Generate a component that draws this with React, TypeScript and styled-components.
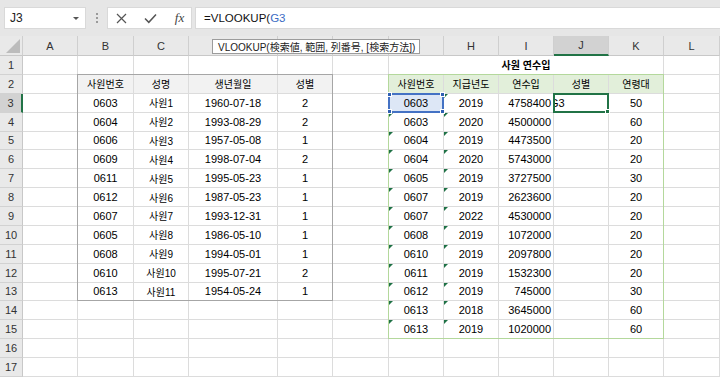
import React from "react";
import styled, { createGlobalStyle } from "styled-components";

const GRID = "#dcdcdc";
const EXCEL_GREEN = "#217346";
const COL_LETTERS = ["A", "B", "C", "D", "E", "F", "G", "H", "I", "J", "K", "L"];
// D, E and F sit under the function tooltip
const HIDDEN_LETTERS = ["D", "E", "F"];
const COL_WIDTHS = [23, 55, 56, 55, 89, 55, 56, 55, 55, 55, 55, 55, 56];
const ROW_COUNT = 17;

const employees = [
    ["0603", "사원1", "1960-07-18", "2"],
    ["0604", "사원2", "1993-08-29", "2"],
    ["0606", "사원3", "1957-05-08", "1"],
    ["0609", "사원4", "1998-07-04", "2"],
    ["0611", "사원5", "1995-05-23", "1"],
    ["0612", "사원6", "1987-05-23", "1"],
    ["0607", "사원7", "1993-12-31", "1"],
    ["0605", "사원8", "1986-05-10", "1"],
    ["0608", "사원9", "1994-05-01", "1"],
    ["0610", "사원10", "1995-07-21", "2"],
    ["0613", "사원11", "1954-05-24", "1"],
];

const incomes = [
    ["0603", "2019", "4758400", "", "50"],
    ["0603", "2020", "4500000", "", "60"],
    ["0604", "2019", "4473500", "", "20"],
    ["0604", "2020", "5743000", "", "20"],
    ["0605", "2019", "3727500", "", "30"],
    ["0607", "2019", "2623600", "", "20"],
    ["0607", "2022", "4530000", "", "20"],
    ["0608", "2019", "1072000", "", "20"],
    ["0610", "2019", "2097800", "", "20"],
    ["0611", "2019", "1532300", "", "20"],
    ["0612", "2019", "745000", "", "30"],
    ["0613", "2018", "3645000", "", "60"],
    ["0613", "2019", "1020000", "", "60"],
];

type Align = "left" | "center" | "right";

interface CellSpec {
    text?: string;
    align?: Align;
    bg?: string;
    bold?: boolean;
    ko?: boolean;
    mark?: boolean;
    span?: number;
    skip?: boolean;
    clipped?: boolean;
}

// r: sheet row (1-based), c: sheet column (1 = A)
const specFor = (r: number, c: number): CellSpec => {
    if (r >= 2 && r <= 13 && c >= 2 && c <= 5) {
        if (r === 2) {
            return {text: ["사원번호", "성명", "생년월일", "성별"][c - 2], bg: "#f2f2f2", ko: true};
        }
        return {text: employees[r - 3][c - 2], ko: c === 3};
    }
    if (r === 1 && c === 7) {
        return {text: "사원 연수입", bold: true, ko: true, span: 5};
    }
    if (r === 1 && c > 7 && c <= 11) {
        return {skip: true};
    }
    if (r >= 2 && r <= 15 && c >= 7 && c <= 11) {
        if (r === 2) {
            return {text: ["사원번호", "지급년도", "연수입", "성별", "연령대"][c - 7], bg: "#e2efda", ko: true};
        }
        if (r === 3 && c === 10) {
            return {text: "G3", align: "left", clipped: true};
        }
        return {
            text: incomes[r - 3][c - 7],
            align: c === 9 ? "right" : "center",
            mark: c === 7 || c === 8,
            bg: r === 3 && c === 7 ? "#dde7f6" : undefined,
        };
    }
    return {};
};

const GlobalStyle = createGlobalStyle`
  html, body {
    margin: 0;
    padding: 0;
    background: #fff;
  }

  body {
    font-family: "Liberation Sans", "Noto Sans CJK KR", sans-serif;
    overflow: hidden;
  }
`;

const Window = styled.div`
  width: 720px;
  height: 378px;
  overflow: hidden;
  background: #fff;
`;

const FormulaBar = styled.div`
  height: 36px;
  box-sizing: border-box;
  background: #e6e6e6;
  display: flex;
  align-items: flex-start;
  padding: 7px 0 0 4px;
`;

const NameBox = styled.div`
  width: 82px;
  height: 22px;
  box-sizing: border-box;
  background: #fff;
  border: 1px solid #d9d9d9;
  display: flex;
  align-items: center;
  justify-content: space-between;
  padding: 0 6px 0 5px;
  font-size: 12px;
  color: #222;
`;

const DropArrow = styled.span`
  width: 0;
  height: 0;
  border-left: 3px solid transparent;
  border-right: 3px solid transparent;
  border-top: 3px solid #555;
`;

const Grip = styled.div`
  width: 21px;
  height: 22px;
  display: flex;
  flex-direction: column;
  align-items: center;
  justify-content: center;
  gap: 2px;

  span {
    width: 2px;
    height: 2px;
    background: #9a9a9a;
  }
`;

const ButtonBox = styled.div`
  width: 85px;
  height: 22px;
  box-sizing: border-box;
  background: #fff;
  border: 1px solid #d9d9d9;
  display: flex;
  align-items: center;
  padding-left: 7px;
  gap: 16px;
`;

const IconSlot = styled.div`
  width: 13px;
  height: 13px;
  display: flex;
  align-items: center;
  justify-content: center;
`;

const Fx = styled.span`
  font-family: "Liberation Serif", serif;
  font-style: italic;
  font-size: 13px;
  color: #444;
`;

const FormulaInput = styled.div`
  flex: 1;
  height: 22px;
  margin-left: 3px;
  box-sizing: border-box;
  background: #fff;
  border: 1px solid #d9d9d9;
  border-right: none;
  display: flex;
  align-items: center;
  padding-left: 8px;
  font-size: 11.5px;
  color: #111;
`;

const RefText = styled.span`
  color: #3b6cc4;
`;

const Sheet = styled.div`
  position: relative;
  display: grid;
  grid-template-columns: ${COL_WIDTHS.map((w) => `${w}px`).join(" ")};
  grid-template-rows: 20px repeat(${ROW_COUNT}, 18.875px);
`;

const Corner = styled.div`
  grid-row: 1;
  grid-column: 1;
  background: #e9e9e9;
  border-right: 1px solid #cfcfcf;
  border-bottom: 1px solid #c8c8c8;
  display: flex;
  align-items: flex-end;
  justify-content: flex-end;
  padding: 0 2px 2px 0;
  box-sizing: border-box;
`;

const CornerTriangle = styled.span`
  width: 0;
  height: 0;
  border-left: 14px solid transparent;
  border-bottom: 14px solid #bcbcbc;
`;

const ColHeader = styled.div<{ $col: number; $selected?: boolean }>`
  grid-row: 1;
  grid-column: ${(p) => p.$col};
  box-sizing: border-box;
  background: ${(p) => (p.$selected ? "#d2d2d2" : "#e9e9e9")};
  border-right: 1px solid #cfcfcf;
  border-bottom: ${(p) => (p.$selected ? `2px solid ${EXCEL_GREEN}` : "1px solid #c8c8c8")};
  display: flex;
  align-items: center;
  justify-content: center;
  font-size: 11px;
  color: #333;
`;

const RowHeader = styled.div<{ $row: number; $selected?: boolean }>`
  grid-row: ${(p) => p.$row};
  grid-column: 1;
  box-sizing: border-box;
  background: ${(p) => (p.$selected ? "#d2d2d2" : "#e9e9e9")};
  border-bottom: 1px solid #d2d2d2;
  border-right: ${(p) => (p.$selected ? `2px solid ${EXCEL_GREEN}` : "1px solid #c8c8c8")};
  display: flex;
  align-items: center;
  justify-content: center;
  font-size: 11px;
  color: #333;
`;

const Cell = styled.div<{
    $row: number;
    $col: number;
    $span?: number;
    $align?: Align;
    $bg?: string;
    $bold?: boolean;
    $ko?: boolean;
    $clipped?: boolean;
}>`
  position: relative;
  grid-row: ${(p) => p.$row};
  grid-column: ${(p) => `${p.$col} / span ${p.$span ?? 1}`};
  min-width: 0;
  box-sizing: border-box;
  border-right: 1px solid ${GRID};
  border-bottom: 1px solid ${GRID};
  background: ${(p) => p.$bg ?? "#fff"};
  display: flex;
  align-items: center;
  justify-content: ${(p) =>
          p.$align === "right" ? "flex-end" : p.$align === "left" ? "flex-start" : "center"};
  padding: ${(p) => (p.$clipped ? "0" : "0 2px")};
  font-size: ${(p) => (p.$ko ? "10px" : "11px")};
  font-weight: ${(p) => (p.$bold ? 700 : 400)};
  color: #000;
  white-space: nowrap;
  overflow: hidden;
  text-indent: ${(p) => (p.$clipped ? "-4px" : "0")};
`;

const TextMark = styled.span`
  position: absolute;
  top: 0;
  left: 0;
  width: 0;
  height: 0;
  border-top: 4px solid #1e7145;
  border-right: 4px solid transparent;
`;

const Frame = styled.div<{ $r1: number; $r2: number; $c1: number; $c2: number; $color: string; $width?: number }>`
  position: relative;
  grid-row: ${(p) => `${p.$r1} / ${p.$r2 + 1}`};
  grid-column: ${(p) => `${p.$c1} / ${p.$c2 + 1}`};
  margin: -1px 0 0 -1px;
  border: ${(p) => `${p.$width ?? 1}px solid ${p.$color}`};
  pointer-events: none;
  z-index: 2;
`;

const Handle = styled.span<{ $top?: boolean; $left?: boolean; $color: string }>`
  position: absolute;
  width: 5px;
  height: 5px;
  background: ${(p) => p.$color};
  border: 1px solid #fff;
  box-sizing: border-box;
  ${(p) => (p.$top ? "top: -3px;" : "bottom: -3px;")}
  ${(p) => (p.$left ? "left: -3px;" : "right: -3px;")}
`;

const Tooltip = styled.div`
  position: absolute;
  left: 212px;
  top: 3px;
  height: 15px;
  box-sizing: border-box;
  padding: 0 4px 0 5px;
  background: #fff;
  border: 1px solid #9c9c9c;
  display: flex;
  align-items: center;
  font-family: "Liberation Sans", "Noto Sans CJK JP", sans-serif;
  font-size: 10px;
  color: #222;
  white-space: nowrap;
  z-index: 3;
`;

const CloseIcon = () => (
    <svg width="11" height="11" viewBox="0 0 11 11">
        <path d="M1 1 L10 10 M10 1 L1 10" stroke="#555" strokeWidth="1.2" fill="none"/>
    </svg>
);

const CheckIcon = () => (
    <svg width="13" height="11" viewBox="0 0 13 11">
        <path d="M1 5.5 L4.8 9.3 L12 1.5" stroke="#555" strokeWidth="1.5" fill="none"/>
    </svg>
);

export default function App() {
    const cells: React.ReactElement[] = [];
    for (let r = 1; r <= ROW_COUNT; r++) {
        for (let c = 1; c <= 12; c++) {
            const spec = specFor(r, c);
            if (spec.skip) continue;
            cells.push(
                <Cell
                    key={`${r}-${c}`}
                    $row={r + 1}
                    $col={c + 1}
                    $span={spec.span}
                    $align={spec.align}
                    $bg={spec.bg}
                    $bold={spec.bold}
                    $ko={spec.ko}
                    $clipped={spec.clipped}
                >
                    {spec.mark && <TextMark/>}
                    {spec.text}
                </Cell>
            );
        }
    }

    return (
        <Window>
            <GlobalStyle/>
            <FormulaBar>
                <NameBox>
                    J3
                    <DropArrow/>
                </NameBox>
                <Grip>
                    <span/>
                    <span/>
                    <span/>
                </Grip>
                <ButtonBox>
                    <IconSlot><CloseIcon/></IconSlot>
                    <IconSlot><CheckIcon/></IconSlot>
                    <IconSlot><Fx>fx</Fx></IconSlot>
                </ButtonBox>
                <FormulaInput>
                    =VLOOKUP(<RefText>G3</RefText>
                </FormulaInput>
            </FormulaBar>
            <Sheet>
                <Corner><CornerTriangle/></Corner>
                {COL_LETTERS.map((letter, i) => (
                    <ColHeader key={letter} $col={i + 2} $selected={letter === "J"}>
                        {HIDDEN_LETTERS.includes(letter) ? "" : letter}
                    </ColHeader>
                ))}
                {Array.from({length: ROW_COUNT}, (_, i) => (
                    <RowHeader key={i} $row={i + 2} $selected={i + 1 === 3}>
                        {i + 1}
                    </RowHeader>
                ))}
                {cells}
                <Frame $r1={3} $r2={14} $c1={3} $c2={6} $color="#a6a6a6"/>
                <Frame $r1={3} $r2={16} $c1={8} $c2={12} $color="#b4d89c"/>
                <Frame $r1={4} $r2={4} $c1={8} $c2={8} $color="#4472c4" $width={2}>
                    <Handle $top $left $color="#2f5fb3"/>
                    <Handle $top $color="#2f5fb3"/>
                    <Handle $left $color="#2f5fb3"/>
                    <Handle $color="#2f5fb3"/>
                </Frame>
                <Frame $r1={4} $r2={4} $c1={11} $c2={11} $color={EXCEL_GREEN} $width={2}>
                    <Handle $color={EXCEL_GREEN}/>
                </Frame>
                <Tooltip>VLOOKUP(検索値, 範囲, 列番号, [検索方法])</Tooltip>
            </Sheet>
        </Window>
    );
}
